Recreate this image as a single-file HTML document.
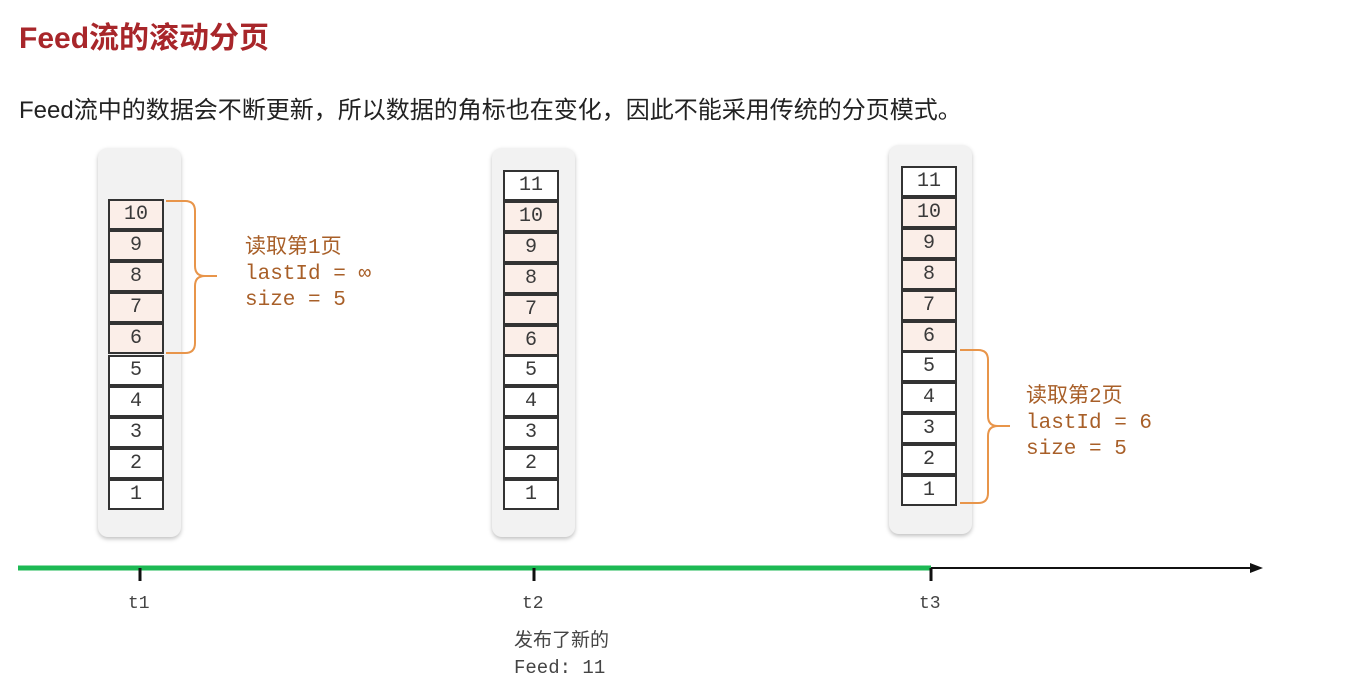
<!DOCTYPE html>
<html><head><meta charset="utf-8"><style>
body{margin:0;width:1367px;height:679px;background:#fff;position:relative;overflow:hidden;font-family:"Liberation Sans","Noto Sans CJK SC",sans-serif}
.t{position:absolute;left:19px;top:13px;font-size:30px;font-weight:bold;color:#a8262a}
.p{position:absolute;left:19px;top:90px;font-size:24px;color:#222}
.box{position:absolute;background:#f2f2f2;border-radius:10px;box-shadow:0 2px 4px rgba(0,0,0,.25);width:83px;height:389px}
.cell{position:absolute;width:52px;border:2px solid #333;box-sizing:content-box;font-family:"Liberation Mono",monospace;font-size:20px;color:#3a3a3a;text-align:center;background:#fff}
.pk{background:#fbeee8}
.m{position:absolute;font-family:"Liberation Mono","Noto Sans CJK SC",monospace;font-size:21px;color:#a85f28;line-height:26px}
.lb{position:absolute;font-family:"Liberation Mono",monospace;font-size:18px;color:#444}
</style></head><body>
<div class="t">Feed流的滚动分页</div>
<div class="p">Feed流中的数据会不断更新，所以数据的角标也在变化，因此不能采用传统的分页模式。</div>
<div class="box" style="left:98px;top:148px"></div>
<div class="box" style="left:492px;top:148px"></div>
<div class="box" style="left:889px;top:145px"></div>
<div id="c"></div>
<svg style="position:absolute;left:0;top:0" width="1367" height="679">
<path d="M166 201 H185 Q195 201 195 211 V266 Q195 276 205 276 H217 M205 276 Q195 276 195 286 V343 Q195 353 185 353 H166" fill="none" stroke="#e8954a" stroke-width="2"/>
<path d="M960 350 H978 Q988 350 988 360 V416 Q988 426 998 426 H1010 M998 426 Q988 426 988 436 V493 Q988 503 978 503 H960" fill="none" stroke="#e8954a" stroke-width="2"/>
<line x1="18" y1="568" x2="931" y2="568" stroke="#1db954" stroke-width="5"/>
<line x1="931" y1="568" x2="1252" y2="568" stroke="#111" stroke-width="2"/>
<path d="M1263 568 L1250 563 L1250 573Z" fill="#111"/>
<g stroke="#111" stroke-width="3"><line x1="140" y1="568" x2="140" y2="581"/><line x1="534" y1="568" x2="534" y2="581"/><line x1="931" y1="568" x2="931" y2="581"/></g>
</svg>
<div class="m" style="left:245px;top:236px">读取第1页<br>lastId = ∞<br>size = 5</div>
<div class="m" style="left:1026px;top:385px">读取第2页<br>lastId = 6<br>size = 5</div>
<div class="lb" style="left:128px;top:594px">t1</div>
<div class="lb" style="left:522px;top:594px">t2</div>
<div class="lb" style="left:919px;top:594px">t3</div>
<div class="lb" style="left:514px;top:628px;font-family:'Liberation Mono','Noto Sans CJK SC',monospace;line-height:27px;font-size:19px">发布了新的<br>Feed: 11</div>
<script>
var c=document.getElementById('c'),h='';
function col(x,top,bot,n,pk){var ch=(bot-top)/n;for(var i=0;i<n;i++){var v=n-i;var y=top+i*ch;h+='<div class="cell'+(pk.indexOf(v)>=0?' pk':'')+'" style="left:'+x+'px;top:'+Math.round(y)+'px;height:'+(Math.round(ch)-4)+'px;line-height:'+(Math.round(ch)-4)+'px">'+v+'</div>';}}
col(108,199,510,10,[10,9,8,7,6]);
col(503,170,510,11,[10,9,8,7,6]);
col(901,166,506,11,[10,9,8,7,6]);
c.innerHTML=h;
</script>
</body></html>
